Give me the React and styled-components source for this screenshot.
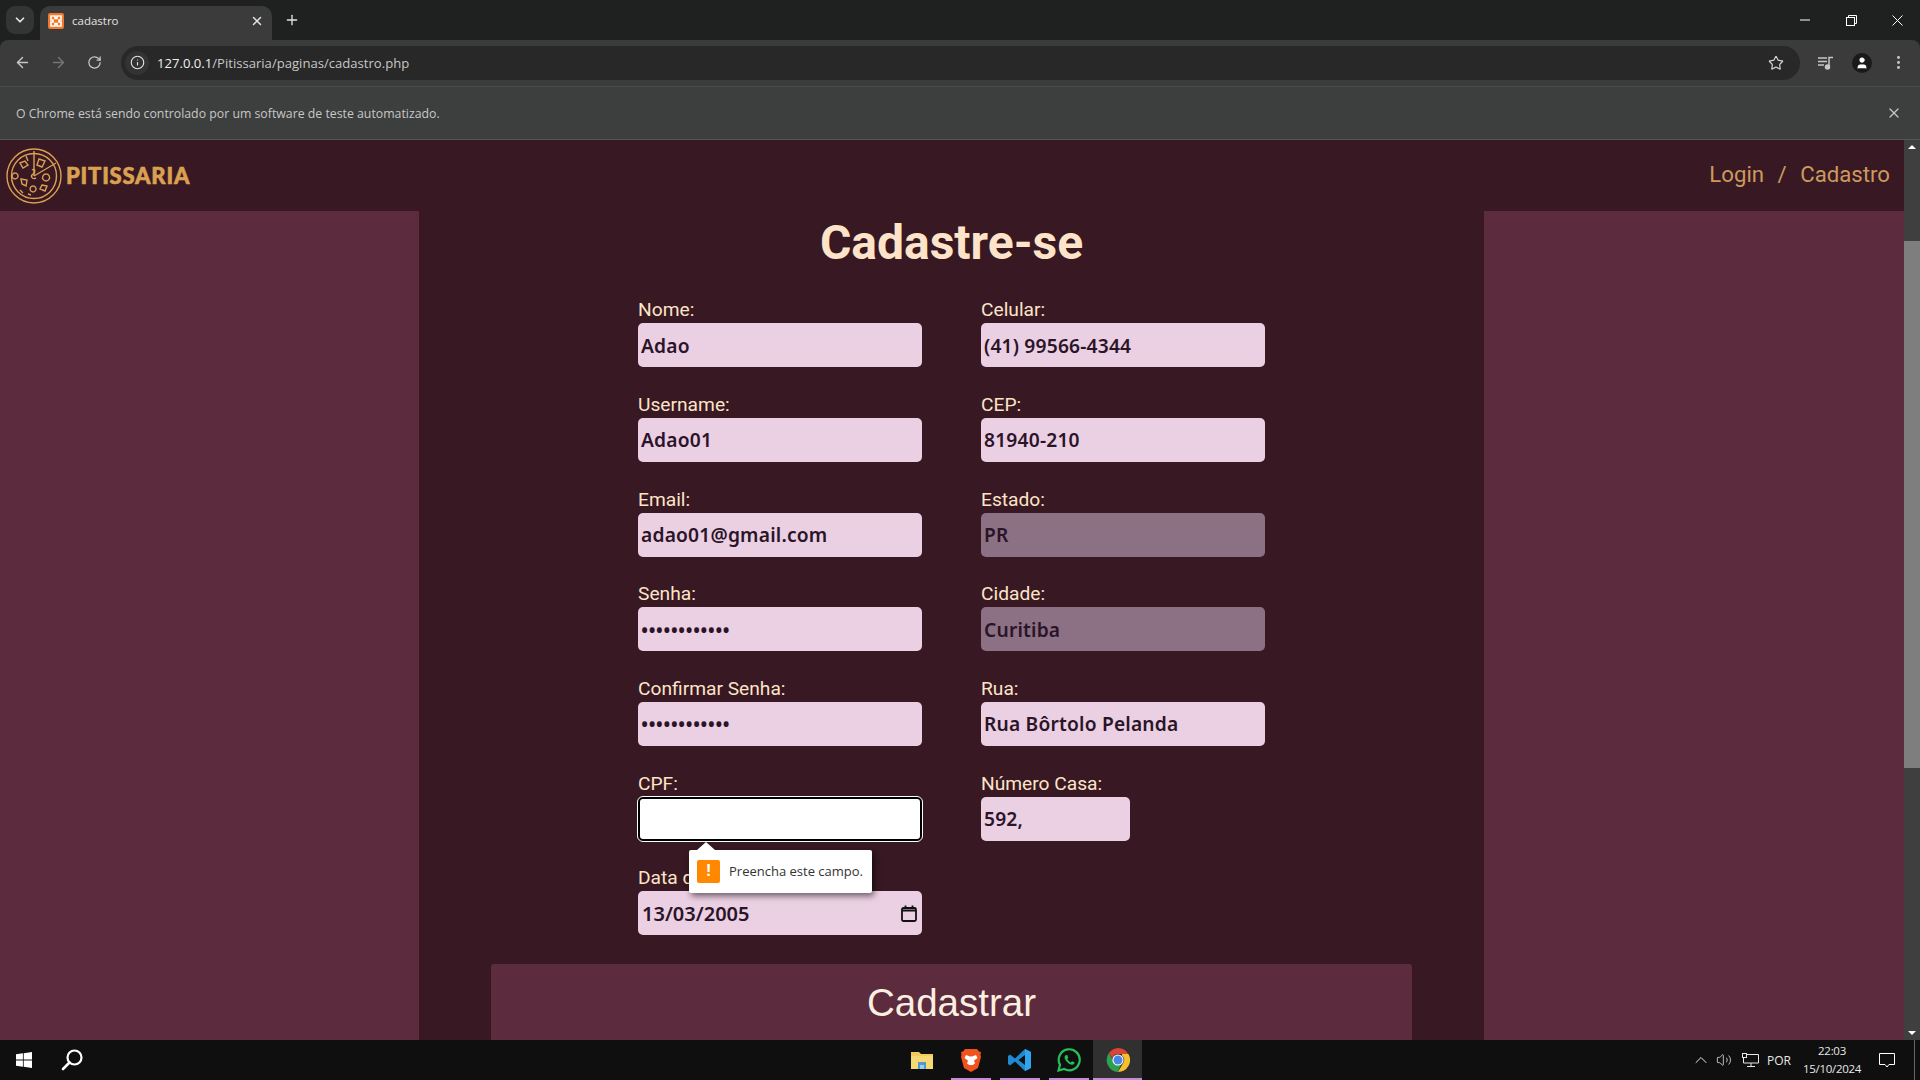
import React from "react";
import styled, { createGlobalStyle } from "styled-components";
import { ArrowLeft, ArrowRight, RotateCw, Info, Star, X, Plus, ChevronDown, MoreVertical, User, ChevronUp, Volume2 } from "lucide-react";

const Global = createGlobalStyle`
  html, body { margin: 0; padding: 0; overflow: hidden; background: #1f2020; }
  * { box-sizing: border-box; }
`;

const Root = styled.div`
  width: 1920px; height: 1080px; display: flex; flex-direction: column; overflow: hidden;
  font-family: "Open Sans", sans-serif;
`;
const TabStrip = styled.div`
  height: 40px; background: #1f2020; display: flex; align-items: flex-end; padding-left: 6px; color: #e3e3e3; flex: none;
`;
const TabMenu = styled.div`
  width: 28px; height: 28px; margin-bottom: 6px; border-radius: 9px; background: #333434;
  display: flex; align-items: center; justify-content: center;
`;
const Tab = styled.div`
  width: 232px; height: 34px; margin-left: 6px; background: #3b3b3b; border-radius: 10px 10px 0 0;
  display: flex; align-items: center; padding: 0 8px 5px; font-size: 11.5px; gap: 8px; color: #e3e3e3;
  span { flex: 1; }
`;
const NewTab = styled.div`
  width: 40px; height: 34px; padding-bottom: 6px; display: flex; align-items: center; justify-content: center;
`;
const WindowControls = styled.div`
  margin-left: auto; display: flex; height: 40px; align-items: center; color: #fff;
`;
const WindowButton = styled.div`
  width: 46px; height: 40px; display: flex; align-items: center; justify-content: center;
`;
const Toolbar = styled.div`
  height: 47px; background: #3b3b3b; border-bottom: 1px solid #4a4a4a; display: flex; align-items: center; flex: none;
  padding: 0 0 1px 4px; border-radius: 8px 8px 0 0; color: #c7c7c7;
`;
const ToolIcon = styled.div`
  width: 36px; height: 36px; display: flex; align-items: center; justify-content: center;
  color: ${(p) => (p.$dim ? "#757575" : "#c7c7c7")};
`;
const UrlBar = styled.div`
  width: 1679px; height: 34px; margin-left: 9px; margin-right: 8px; background: #282828; border-radius: 17px;
  display: flex; align-items: center; padding-left: 4px; padding-right: 16px; font-size: 13.1px; color: #c7c7c7;
  b { font-weight: 400; color: #f0f0f0; }
`;
const SiteChip = styled.div`
  width: 24px; height: 24px; border-radius: 50%; background: #333; display: flex; align-items: center; justify-content: center; margin-right: 8px; color: #e3e3e3;
`;
const UrlText = styled.div`flex: 1;`;
const Avatar = styled.div`
  width: 20px; height: 20px; border-radius: 50%; background: #1a1a1a; color: #fff; display: flex; align-items: center; justify-content: center;
`;
const InfoBar = styled.div`
  height: 53px; background: #3d3e3e; border-bottom: 1px solid #555; display: flex; align-items: center; justify-content: space-between;
  padding: 0 18px 0 16px; font-size: 12.3px; color: #c7c7c7; flex: none;
`;
const Viewport = styled.div`flex: 1; display: flex; min-height: 0;`;
const Page = styled.div`flex: 1; display: flex; flex-direction: column; overflow: hidden; background: #371823;`;
const Navbar = styled.div`
  height: 71px; flex: none; background: #371823; display: flex; align-items: center; justify-content: space-between; padding: 0 14px 0 6px;
`;
const Brand = styled.div`display: flex; align-items: center; gap: 4px;`;
const BrandName = styled.div`
  font-family: "Lato", sans-serif; font-weight: 900; font-size: 22px; letter-spacing: 0.8px; color: #dba052;
  -webkit-text-stroke: 0.6px #dba052;
`;
const NavLinks = styled.div`
  display: flex; gap: 13.5px; padding-bottom: 3px; font-family: Roboto, sans-serif; font-size: 22.2px; color: #cc9a5e;
`;
const Main = styled.div`flex: 1; display: grid; grid-template-columns: 419px 1065px 1fr; min-height: 0;`;
const Side = styled.div`background: #5c2b3d;`;
const Center = styled.div`background: #371823; display: flex; flex-direction: column; align-items: center; padding-top: 5px;`;
const Title = styled.h1`
  margin: 0 0 30.33px; font-family: Roboto, sans-serif; font-weight: 700; font-size: 48px; line-height: 54px; color: #fde4c8;
`;
const FormGrid = styled.div`
  display: grid; grid-template-columns: 284px 284px; column-gap: 59px; row-gap: 27.67px;
`;
const Field = styled.div`position: relative; display: flex; flex-direction: column; height: 67px;`;
const Label = styled.label`
  font-family: Roboto, sans-serif; font-size: 19.2px; line-height: 19px; color: #fde4c8; height: 23px; flex: none;
`;
const Input = styled.input`
  width: ${(p) => p.$w || "284px"}; height: 44px; border: 0; outline: 0; border-radius: 5px; padding: 0 3px; flex: none;
  background: ${(p) => (p.$muted ? "#8c7084" : "#ebcfe2")};
  color: #2a1428; font-family: "Noto Sans", sans-serif; font-weight: 600; font-size: 19.2px; letter-spacing: 0.2px;
`;
const FocusedInput = styled(Input)`
  background: #fff; border: 2px solid #000; outline: 1.5px solid #fff; border-radius: 5px;
`;
const DateBox = styled.div`
  width: 284px; height: 44px; border-radius: 5px; background: #ebcfe2; display: flex; align-items: center; justify-content: space-between; flex: none;
  padding: 0 5px 0 4px; color: #2a1428; font-family: "Noto Sans", sans-serif; font-weight: 600; font-size: 20px;
`;
const Bubble = styled.div`
  position: absolute; left: 51px; top: 76px; width: 183px; height: 43px; background: #fff; border-radius: 2px;
  box-shadow: 2px 3px 6px rgba(0,0,0,.55); display: flex; align-items: center; gap: 9px; padding-left: 8px; z-index: 2;
  font-size: 13px; color: #333;
  &::before { content: ""; position: absolute; left: 8px; top: -8px; width: 0; height: 0; border-left: 9px solid transparent; border-right: 9px solid transparent; border-bottom: 8px solid #fff; }
`;
const Warn = styled.div`
  width: 23px; height: 23px; background: #ff8800; border-radius: 2px; color: #fff; font-weight: 700; font-size: 17px;
  display: flex; align-items: center; justify-content: center; font-family: "Liberation Sans", sans-serif;
`;
const SubmitButton = styled.button`
  flex: none; width: 921px; height: 76px; margin-top: 29px; padding-top: 2px; border: 0; border-radius: 3px 3px 0 0; background: #5c2b3d; color: #fbefe0;
  font-family: "Liberation Sans", sans-serif; font-size: 38.5px;
`;
const Scrollbar = styled.div`
  width: 16px; flex: none; background: #3f3f3f; display: flex; flex-direction: column; align-items: center; justify-content: space-between;
  position: relative; padding: 5px 0;
`;
const ScrollThumb = styled.div`
  position: absolute; left: 0; top: 101px; width: 16px; height: 527px; background: #7e7e7e;
`;
const Arrow = styled.div`
  width: 0; height: 0; border-left: 4px solid transparent; border-right: 4px solid transparent;
  ${(p) => (p.$down ? "border-top: 4px solid #fff;" : "border-bottom: 4px solid #fff;")}
`;
const Taskbar = styled.div`
  height: 40px; flex: none; background: #0f0f0f; display: flex; align-items: center; color: #fff;
`;
const TaskLeft = styled.div`width: 897px; display: flex; align-items: center; flex: none;`;
const StartButton = styled.div`width: 48px; height: 40px; display: flex; align-items: center; justify-content: center;`;
const TaskApps = styled.div`display: flex; height: 40px;`;
const TaskApp = styled.div`
  position: relative; width: 49px; height: 40px; display: flex; align-items: center; justify-content: center;
  background: ${(p) => (p.$active ? "#303030" : "transparent")};
  &::after {
    content: ""; position: absolute; bottom: 0; height: 2px; background: #c58ad8;
    left: ${(p) => (p.$active ? "0" : p.$open ? "5px" : "0")};
    right: ${(p) => (p.$active ? "0" : p.$open ? "4px" : "100%")};
  }
`;
const Tray = styled.div`
  margin-left: auto; display: flex; align-items: center; height: 40px; color: #e8e8e8; font-size: 12px;
`;
const TrayIcon = styled.div`width: ${(p) => p.$w}px; display: flex; justify-content: center; align-items: center;`;
const Lang = styled.div`width: 29px; text-align: center;`;
const Clock = styled.div`width: 77px; text-align: center; font-size: 11.5px; line-height: 18px; letter-spacing: -0.3px;`;
const Notify = styled.div`width: 33px; display: flex; justify-content: center;`;
const DesktopEdge = styled.div`width: 6px; height: 40px; border-left: 1px solid #666; margin-left: 10.5px;`;

const PizzaLogo = () => (
  <svg width="56" height="56" viewBox="0 0 56 56" fill="none" stroke="#dba052" strokeWidth="1.4">
    <circle cx="28" cy="28" r="27" />
    <circle cx="28" cy="28" r="22.5" />
    <path d="M28 28 L28 3 M28 28 L50 15" />
    <path d="M33 11 l6 2 -3 6 -5 -2 z M14 15 l5 -2 3 4 -5 3 z M9 25 a3 3 0 1 0 .1 0 M40 26 a3.5 3.5 0 1 0 .1 0 M15 31 l6 1 -1 6 -4 -2 z M27 38 a3 3 0 1 0 .1 0 M36 37 l5 1 -2 5 -5 -2 z M20 8 l2 5 M26 22 c3 -2 4 2 1 4 c-3 2 -1 6 3 4" />
    <path d="M14 42 l3 3 M22 46 l3 1" />
  </svg>
);
const CalendarIcon = () => (
  <svg width="16" height="17" viewBox="0 0 16 17" fill="none" stroke="#111" strokeWidth="1.800">
    <rect x="1" y="3" width="14" height="13" rx="1.500" />
    <path d="M1 5.500h14M4.500 0.500v3M11.500 0.500v3" />
  </svg>
);
const Xampp = () => (
  <svg width="16" height="16" viewBox="0 0 16 16">
    <rect width="16" height="16" rx="2" fill="#f2792b" />
    <path d="M3 3h4v2.500h2V3h4v4h-2v2h2v4H9v-2.500H7V13H3V9h2V7H3z" fill="none" stroke="#fff" strokeWidth="1.600" />
  </svg>
);
const RestoreIcon = () => (
  <svg width="11" height="11" viewBox="0 0 11 11" fill="none" stroke="#fff">
    <rect x="0.500" y="2.500" width="8" height="8" />
    <path d="M2.500 2.500v-2h8v8h-2" />
  </svg>
);
const MinimizeIcon = () => (
  <svg width="10" height="2" viewBox="0 0 10 2"><path d="M0 1h10" stroke="#fff" /></svg>
);
const CloseIcon = () => (
  <svg width="11" height="11" viewBox="0 0 11 11"><path d="M.5.500l10 10M10.500.500l-10 10" stroke="#fff" /></svg>
);
const MediaIcon = () => (
  <svg width="16" height="14" viewBox="0 0 16 14" fill="none" stroke="#c7c7c7" strokeWidth="1.500">
    <path d="M0 2h9M0 5.500h9M0 9h6M11 11V1.500h4" />
    <circle cx="9.500" cy="11" r="2" fill="#c7c7c7" />
  </svg>
);
const WinLogo = () => (
  <svg width="16" height="16" viewBox="0 0 16 16" fill="#fff">
    <path d="M0 2.300 6.900 1.300V7.600H0zM7.700 1.200 16 0V7.600H7.700zM0 8.400H6.900V14.700L0 13.700zM7.700 8.400H16V16L7.700 14.800z" />
  </svg>
);
const SearchIcon = () => (
  <svg width="24" height="24" viewBox="0 0 24 24" fill="none" stroke="#fff" strokeWidth="2.200">
    <circle cx="14.500" cy="9.500" r="7" />
    <path d="M9.500 14.500 3 21" strokeLinecap="round" strokeWidth="2.600" />
  </svg>
);
const FilesIcon = () => (
  <svg width="22" height="20" viewBox="0 0 22 20">
    <path d="M0 2h8l2 2h12v15H0z" fill="#f4c95d" />
    <path d="M0 6h22v13H0z" fill="#f8d775" />
    <path d="M7 12h8v7h-2v-4H9v4H7z" fill="#4f9bd1" />
    <path d="M9 15h4v4H9z" fill="#a9cbe0" />
  </svg>
);
const BraveIcon = () => (
  <svg width="22" height="24" viewBox="0 0 22 24">
    <path d="M5 1h12l2 2.500 2 .5-.5 3 .5 2-3 11-7 4-7-4L1 9l.5-2L1 4l2-.5z" fill="#f1531f" />
    <path d="M6 7l4 1.500h2L16 7l1.500 3-3.500 2.500 1 3-3 2h-2l-3-2 1-3L4.500 10z" fill="#fff" />
    <path d="M9 17h4l-2 2z" fill="#f1531f" />
  </svg>
);
const VSCodeIcon = () => (
  <svg width="24" height="24" viewBox="0 0 24 24">
    <path d="M17 1 23 4v16l-6 3-10-9.500L2 17.500 0 16V8l2-1.500 5 4z" fill="#1f8ad2" />
    <path d="M17 1 23 4v16l-6 3z" fill="#2fa5ef" />
    <path d="M17 7v10l-6.500-5z" fill="#0f0f0f" />
  </svg>
);
const WhatsIcon = () => (
  <svg width="24" height="24" viewBox="0 0 24 24" fill="none">
    <path d="M1.500 22.500 3 16.800A10.500 10.500 0 1 1 7.200 21z" stroke="#25c05a" strokeWidth="2.200" />
    <path d="M8.500 7.200c-1.300 1-1.300 3 .3 5.200 2 2.800 4.500 4.300 6.500 4.300 1.300 0 2.300-1 2.300-2.200l-2.500-1.300-1.200 1.200c-1.500-.6-2.900-2-3.600-3.500l1-1.200-1.100-2.600z" fill="#25c05a" />
  </svg>
);
const ChromeIcon = () => (
  <svg width="24" height="24" viewBox="0 0 24 24">
    <path d="M12 0a12 12 0 0 1 10.400 6H12a6 6 0 0 0-5.700 4.100L2.900 5.100A12 12 0 0 1 12 0z" fill="#db4437" />
    <path d="M22.400 6A12 12 0 0 1 12 24l5.200-9A6 6 0 0 0 16 7.500V6z" fill="#f6c02c" />
    <path d="M12 24A12 12 0 0 1 2.900 5.100l5 8.900a6 6 0 0 0 7 2.300z" fill="#2f9e4f" />
    <circle cx="12" cy="12" r="5.600" fill="#fff" />
    <circle cx="12" cy="12" r="4.500" fill="#4a86e8" />
  </svg>
);
const NetworkIcon = () => (
  <svg width="17" height="14" viewBox="0 0 17 14" fill="none" stroke="#e8e8e8">
    <path d="M4.500 1.500H16.500V10H1.500V5" />
    <rect x="0.500" y="0.500" width="4" height="4" />
    <path d="M9 10v3M5 13.500h8" />
  </svg>
);
const NotifyIcon = () => (
  <svg width="16" height="15" viewBox="0 0 16 15" fill="none" stroke="#fff">
    <path d="M.5.500h15v11h-5.500l-2 2.500-2-2.500H.5z" />
  </svg>
);

const fields = [
  { label: "Nome:", value: "Adao" },
  { label: "Celular:", value: "(41) 99566-4344" },
  { label: "Username:", value: "Adao01" },
  { label: "CEP:", value: "81940-210" },
  { label: "Email:", value: "adao01@gmail.com" },
  { label: "Estado:", value: "PR", muted: true },
  { label: "Senha:", value: "adao01senha1", type: "password" },
  { label: "Cidade:", value: "Curitiba", muted: true },
  { label: "Confirmar Senha:", value: "adao01senha1", type: "password" },
  { label: "Rua:", value: "Rua Bôrtolo Pelanda" },
];

export default function App() {
  return (
    <Root>
      <Global />
      <TabStrip>
        <TabMenu><ChevronDown size={14} strokeWidth={3} /></TabMenu>
        <Tab>
          <Xampp />
          <span>cadastro</span>
          <X size={14} strokeWidth={2.500} />
        </Tab>
        <NewTab><Plus size={16} strokeWidth={2} /></NewTab>
        <WindowControls>
          <WindowButton><MinimizeIcon /></WindowButton>
          <WindowButton><RestoreIcon /></WindowButton>
          <WindowButton><CloseIcon /></WindowButton>
        </WindowControls>
      </TabStrip>
      <Toolbar>
        <ToolIcon><ArrowLeft size={17} strokeWidth={2} /></ToolIcon>
        <ToolIcon $dim><ArrowRight size={17} strokeWidth={2} /></ToolIcon>
        <ToolIcon><RotateCw size={15} strokeWidth={2} /></ToolIcon>
        <UrlBar>
          <SiteChip><Info size={15} strokeWidth={1.800} /></SiteChip>
          <UrlText><b>127.0.0.1</b>/Pitissaria/paginas/cadastro.php</UrlText>
          <Star size={16} strokeWidth={1.800} color="#d0d0d0" />
        </UrlBar>
        <ToolIcon><MediaIcon /></ToolIcon>
        <ToolIcon><Avatar><User size={14} fill="#fff" strokeWidth={1} /></Avatar></ToolIcon>
        <ToolIcon><MoreVertical size={17} strokeWidth={2.200} /></ToolIcon>
      </Toolbar>
      <InfoBar>
        <span>O Chrome está sendo controlado por um software de teste automatizado.</span>
        <X size={16} strokeWidth={1.800} />
      </InfoBar>
      <Viewport>
        <Page>
          <Navbar>
            <Brand>
              <PizzaLogo />
              <BrandName>PITISSARIA</BrandName>
            </Brand>
            <NavLinks><span>Login</span><span>/</span><span>Cadastro</span></NavLinks>
          </Navbar>
          <Main>
            <Side />
            <Center>
              <Title>Cadastre-se</Title>
              <FormGrid>
                {fields.map((f) => (
                  <Field key={f.label}>
                    <Label>{f.label}</Label>
                    <Input readOnly type={f.type || "text"} value={f.value} $muted={f.muted} />
                  </Field>
                ))}
                <Field>
                  <Label>CPF:</Label>
                  <FocusedInput readOnly value="" />
                  <Bubble>
                    <Warn>!</Warn>
                    Preencha este campo.
                  </Bubble>
                </Field>
                <Field>
                  <Label>Número Casa:</Label>
                  <Input readOnly value="592," $w="149px" />
                </Field>
                <Field>
                  <Label>Data de Nascimento:</Label>
                  <DateBox>13/03/2005<CalendarIcon /></DateBox>
                </Field>
              </FormGrid>
              <SubmitButton>Cadastrar</SubmitButton>
            </Center>
            <Side />
          </Main>
        </Page>
        <Scrollbar>
          <Arrow />
          <ScrollThumb />
          <Arrow $down />
        </Scrollbar>
      </Viewport>
      <Taskbar>
        <TaskLeft>
          <StartButton><WinLogo /></StartButton>
          <StartButton><SearchIcon /></StartButton>
        </TaskLeft>
        <TaskApps>
          <TaskApp><FilesIcon /></TaskApp>
          <TaskApp $open><BraveIcon /></TaskApp>
          <TaskApp $open><VSCodeIcon /></TaskApp>
          <TaskApp $open><WhatsIcon /></TaskApp>
          <TaskApp $active><ChromeIcon /></TaskApp>
        </TaskApps>
        <Tray>
          <TrayIcon $w={23}><ChevronUp size={20} strokeWidth={1.200} /></TrayIcon>
          <TrayIcon $w={23}><Volume2 size={16} strokeWidth={1.200} /></TrayIcon>
          <TrayIcon $w={29}><NetworkIcon /></TrayIcon>
          <Lang>POR</Lang>
          <Clock>22:03<br />15/10/2024</Clock>
          <Notify><NotifyIcon /></Notify>
          <DesktopEdge />
        </Tray>
      </Taskbar>
    </Root>
  );
}
